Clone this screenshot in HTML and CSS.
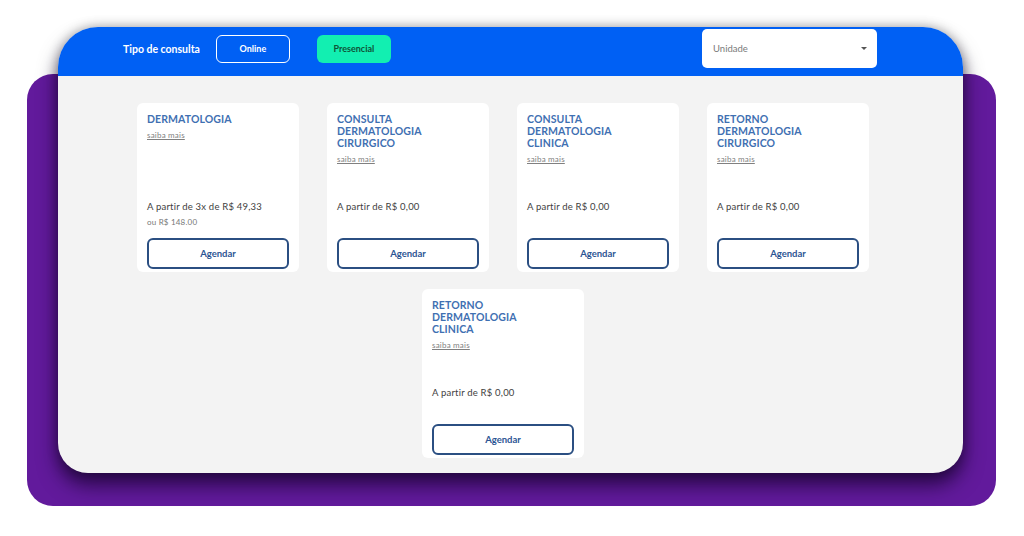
FILE: index.html
```html
<!DOCTYPE html>
<html lang="pt-BR">
<head>
<meta charset="utf-8">
<title>Tipo de consulta</title>
<link rel="stylesheet" href="styles.css">
</head>
<body>
<div class="stage">
  <div class="window">
    <header class="topbar">
      <span class="label">Tipo de consulta</span>
      <button class="tab tab-outline">Online</button>
      <button class="tab tab-active">Presencial</button>
      <div class="select">
        <span>Unidade</span>
        <span class="caret"></span>
      </div>
    </header>
    <main class="content">
      <div class="cards">
        <div class="card">
          <div class="card-top">
            <div class="title">DERMATOLOGIA</div>
            <a class="more">saiba mais</a>
          </div>
          <div class="price">A partir de 3x de R$ 49,33</div>
          <div class="price-alt">ou R$ 148.00</div>
          <button class="book">Agendar</button>
        </div>
        <div class="card">
          <div class="card-top">
            <div class="title">CONSULTA DERMATOLOGIA CIRURGICO</div>
            <a class="more">saiba mais</a>
          </div>
          <div class="price">A partir de R$ 0,00</div>
          <button class="book">Agendar</button>
        </div>
        <div class="card">
          <div class="card-top">
            <div class="title">CONSULTA DERMATOLOGIA CLINICA</div>
            <a class="more">saiba mais</a>
          </div>
          <div class="price">A partir de R$ 0,00</div>
          <button class="book">Agendar</button>
        </div>
        <div class="card">
          <div class="card-top">
            <div class="title">RETORNO DERMATOLOGIA CIRURGICO</div>
            <a class="more">saiba mais</a>
          </div>
          <div class="price">A partir de R$ 0,00</div>
          <button class="book">Agendar</button>
        </div>
        <div class="card">
          <div class="card-top">
            <div class="title">RETORNO DERMATOLOGIA CLINICA</div>
            <a class="more">saiba mais</a>
          </div>
          <div class="price">A partir de R$ 0,00</div>
          <button class="book">Agendar</button>
        </div>
      </div>
    </main>
  </div>
</div>
</body>
</html>
```

FILE: styles.css
```css
html, body {
  margin: 0;
  padding: 0;
  background: #ffffff;
  font-family: Lato, "Open Sans", Arial, sans-serif;
}

.stage {
  position: relative;
  width: 1024px;
  height: 536px;
  padding: 27px 0 0 58px;
  box-sizing: border-box;
}

.stage::before {
  content: "";
  position: absolute;
  left: 27px;
  top: 74px;
  width: 969px;
  height: 432px;
  background: #621a9c;
  border-radius: 26px;
}

.window {
  position: relative;
  width: 905px;
  height: 446px;
  background: #f3f3f3;
  border-radius: 40px 40px 30px 30px;
  overflow: hidden;
  box-shadow: 0 12px 20px rgba(15, 0, 35, 0.7), 0 0 12px rgba(0, 0, 0, 0.3);
  display: flex;
  flex-direction: column;
}

.topbar {
  height: 49px;
  flex: none;
  background: #0060f4;
  display: flex;
  align-items: center;
  padding: 0 86px 6px 65px;
  box-sizing: border-box;
}

.label {
  color: #ffffff;
  font-weight: 700;
  font-size: 10.5px;
  margin-right: 16px;
}

.tab {
  width: 74px;
  height: 28px;
  border-radius: 6px;
  font-family: inherit;
  font-weight: 700;
  font-size: 9px;
  padding: 0;
}

.tab-outline {
  background: transparent;
  border: 1px solid #ffffff;
  color: #ffffff;
  margin-right: 27px;
}

.tab-active {
  background: #12efb1;
  border: none;
  color: #0f5438;
}

.select {
  margin-left: auto;
  width: 175px;
  height: 39px;
  background: #ffffff;
  border-radius: 5px;
  display: flex;
  align-items: center;
  justify-content: space-between;
  padding: 0 10px 0 11px;
  box-sizing: border-box;
  color: #7a7a7a;
  font-size: 9.5px;
}

.caret {
  width: 0;
  height: 0;
  border-left: 3px solid transparent;
  border-right: 3px solid transparent;
  border-top: 3px solid #555555;
}

.content {
  flex: 1;
  padding: 27px 94px 0 79px;
}

.cards {
  display: flex;
  flex-wrap: wrap;
  justify-content: center;
  column-gap: 28px;
  row-gap: 17px;
}

.card {
  width: 162px;
  height: 169px;
  background: #ffffff;
  border-radius: 6px;
  padding: 10px 10px 3px;
  box-sizing: border-box;
  display: flex;
  flex-direction: column;
}

.card-top {
  height: 88px;
  flex: none;
}

.title {
  width: 100px;
  color: #3f70b2;
  font-weight: 700;
  font-size: 10.5px;
  line-height: 12px;
  letter-spacing: 0.1px;
}

.more {
  display: block;
  width: fit-content;
  margin-top: 5px;
  font-size: 8px;
  letter-spacing: 0.2px;
  color: #808080;
  text-decoration: underline;
  line-height: 10px;
}

.price {
  font-size: 9.5px;
  letter-spacing: 0.2px;
  line-height: 12px;
  color: #3e3e3e;
}

.price-alt {
  margin-top: 3px;
  font-size: 8px;
  letter-spacing: 0.2px;
  line-height: 12px;
  color: #777777;
}

.book {
  margin-top: auto;
  height: 31px;
  width: 100%;
  background: #ffffff;
  border: 2px solid #2b4f82;
  border-radius: 6px;
  color: #2c5594;
  font-family: inherit;
  font-weight: 700;
  font-size: 9.5px;
  padding: 0;
}
```
